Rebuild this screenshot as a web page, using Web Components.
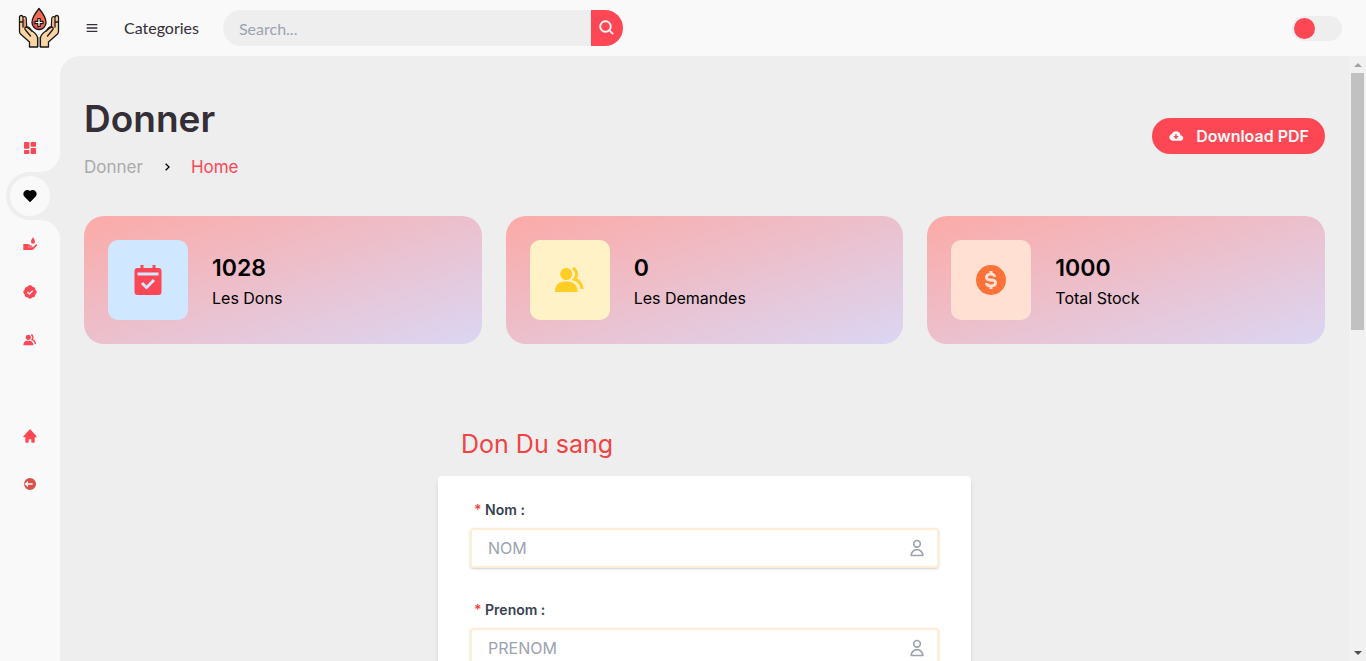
<!DOCTYPE html>
<html lang="fr">
<head>
<meta charset="utf-8">
<meta name="viewport" content="width=device-width, initial-scale=1">
<title>Donner</title>
<style>
  :root {
    --light: #f9f9f9;
    --grey: #eee;
    --dark: #342e37;
    --red: #fd4755;
    --sans: Inter, "Open Sans", sans-serif;
    --lato: Lato, "Open Sans", sans-serif;
  }
  html, body { height: 100%; margin: 0; }
  body { background: var(--light); color: #000; font-family: var(--sans); font-size: 15px; overflow: hidden; }
</style>
</head>
<body>
<app-shell>
  <app-logo slot="logo"></app-logo>
  <top-bar slot="top"></top-bar>
  <side-nav slot="side"></side-nav>
  <page-header heading="Donner" current="Home" action="Download PDF"></page-header>
  <stat-grid>
    <stat-card icon="calendar" value="1028" label="Les Dons" style="--tile:#cfe8ff;--ink:#fd4755"></stat-card>
    <stat-card icon="group" value="0" label="Les Demandes" style="--tile:#fff2c6;--ink:#ffce26"></stat-card>
    <stat-card icon="dollar" value="1000" label="Total Stock" style="--tile:#ffe0d3;--ink:#fd7238"></stat-card>
  </stat-grid>
  <donation-form heading="Don Du sang">
    <form-field name="nom" label="Nom :" placeholder="NOM"></form-field>
    <form-field name="prenom" label="Prenom :" placeholder="PRENOM"></form-field>
  </donation-form>
</app-shell>

<script>
const ICONS = {
  menu: '<path d="M4 6h16v2H4zm0 5h16v2H4zm0 5h16v2H4z"/>',
  search: '<path stroke="currentColor" stroke-width=".5" d="M10 18a7.952 7.952 0 0 0 4.897-1.688l4.396 4.396 1.414-1.414-4.396-4.396A7.952 7.952 0 0 0 18 10c0-4.411-3.589-8-8-8s-8 3.589-8 8 3.589 8 8 8zm0-14c3.309 0 6 2.691 6 6s-2.691 6-6 6-6-2.691-6-6 2.691-6 6-6z"/>',
  dashboard: '<path d="M4 13h6a1 1 0 0 0 1-1V4a1 1 0 0 0-1-1H4a1 1 0 0 0-1 1v8a1 1 0 0 0 1 1zm-1 7a1 1 0 0 0 1 1h6a1 1 0 0 0 1-1v-4a1 1 0 0 0-1-1H4a1 1 0 0 0-1 1v4zm10 0a1 1 0 0 0 1 1h6a1 1 0 0 0 1-1v-7a1 1 0 0 0-1-1h-6a1 1 0 0 0-1 1v7zm1-10h6a1 1 0 0 0 1-1V4a1 1 0 0 0-1-1h-6a1 1 0 0 0-1 1v5a1 1 0 0 0 1 1z"/>',
  heart: '<path d="M20.205 4.791a5.938 5.938 0 0 0-4.209-1.754A5.906 5.906 0 0 0 12 4.595a5.904 5.904 0 0 0-3.996-1.558 5.942 5.942 0 0 0-4.213 1.758c-2.353 2.363-2.352 6.059.002 8.412L12 21.414l8.207-8.207c2.354-2.353 2.355-6.049-.002-8.416z"/>',
  donate: '<path d="M2 12h7l4 2.200h2.500V16H9v1h7.500l4-4.300a1.300 1.300 0 0 1 2 1.600L17 20.300a3 3 0 0 1-2 .7H2z"/><path d="M16.500 2s-3 4.200-3 6.500a3 3 0 0 0 6 0c0-2.300-3-6.500-3-6.500z"/>',
  badge: '<path d="M19.965 8.521C19.988 8.347 20 8.173 20 8c0-2.379-2.143-4.288-4.521-3.965C14.786 2.802 13.466 2 12 2s-2.786.802-3.479 2.035C6.138 3.712 4 5.621 4 8c0 .173.012.347.035.521C2.802 9.215 2 10.535 2 12s.802 2.785 2.035 3.479A3.976 3.976 0 0 0 4 16c0 2.379 2.138 4.283 4.521 3.965C9.214 21.198 10.534 22 12 22s2.786-.802 3.479-2.035C17.857 20.283 20 18.379 20 16c0-.173-.012-.347-.035-.521C21.198 14.785 22 13.465 22 12s-.802-2.785-2.035-3.479zm-9.01 7.895-3.667-3.714 1.424-1.404 2.257 2.286 4.327-4.294 1.408 1.42-5.749 5.706z"/>',
  group: '<path d="M9.500 12c2.206 0 4-1.794 4-4s-1.794-4-4-4-4 1.794-4 4 1.794 4 4 4zm1.500 1H8c-3.309 0-6 2.691-6 6v1h15v-1c0-3.309-2.691-6-6-6z"/><path d="M16.604 11.048a5.67 5.67 0 0 0 .751-3.44c-.179-1.784-1.175-3.361-2.803-4.44l-1.105 1.666c1.119.742 1.8 1.799 1.918 2.974a3.693 3.693 0 0 1-1.072 2.986l-1.192 1.192 1.618.475C18.951 13.701 19 17.957 19 18h2c0-1.789-.956-5.285-4.396-6.952z"/>',
  home: '<path d="m21.743 12.331-9-10c-.379-.422-1.107-.422-1.486 0l-9 10a.998.998 0 0 0-.17 1.076c.16.361.518.593.913.593h2v7a1 1 0 0 0 1 1h3a1 1 0 0 0 1-1v-4h4v4a1 1 0 0 0 1 1h3a1 1 0 0 0 1-1v-7h2a.998.998 0 0 0 .743-1.669z"/>',
  logout: '<path fill-rule="evenodd" d="M12 3a9 9 0 1 0 0 18 9 9 0 0 0 0-18zM9 7.500V11h7v2H9v3.500L3.500 12z"/>',
  calendar: '<path fill-rule="evenodd" d="M7 2h2v2h6V2h2v2h2a2 2 0 0 1 2 2v14a2 2 0 0 1-2 2H5a2 2 0 0 1-2-2V6a2 2 0 0 1 2-2h2zM5 7v2h14V7zm6 11.400 5.700-5.700-1.400-1.400-4.300 4.300-2.300-2.300-1.400 1.400z"/>',
  dollar: '<path fill-rule="evenodd" d="M12 2a10 10 0 1 0 0 20 10 10 0 0 0 0-20zM13 16.915V18h-2v-1.080c-2.339-.367-3-2.002-3-2.920h2c.011.143.159 1 2 1 1.380 0 2-.585 2-1 0-.324 0-1-2-1-3.480 0-4-1.880-4-3 0-1.288 1.029-2.584 3-2.915V6.012h2v1.109c1.734.410 2.400 1.853 2.400 2.879h-1l-1 .018C13.386 9.638 13.185 9 12 9c-1.299 0-2 .516-2 1 0 .374 0 1 2 1 3.480 0 4 1.880 4 3 0 1.288-1.029 2.584-3 2.915z"/>',
  cloud: '<path fill-rule="evenodd" d="M18.948 11.112C18.511 7.670 15.563 5 12.004 5c-2.756 0-5.150 1.611-6.243 4.150-2.148.642-3.757 2.670-3.757 4.850 0 2.757 2.243 5 5 5h12c2.206 0 4-1.794 4-4a4.008 4.008 0 0 0-3.056-3.888zM11 9h2v3h3l-4 5-4-5h3z"/>',
  chevron: '<path d="M10.707 17.707 16.414 12l-5.707-5.707-1.414 1.414L13.586 12l-4.293 4.293z"/>',
  user: '<path fill="none" stroke="currentColor" stroke-width="2" stroke-linejoin="round" d="M16 7a4 4 0 1 1-8 0 4 4 0 0 1 8 0zM12 14a7 7 0 0 0-7 7h14a7 7 0 0 0-7-7z"/>'
};

function define(name, render) {
  customElements.define(name, class extends HTMLElement {
    constructor() { super(); this.attachShadow({ mode: 'open' }); }
    connectedCallback() {
      const t = document.createElement('template');
      t.innerHTML = render(this);
      this.shadowRoot.replaceChildren(t.content.cloneNode(true));
    }
  });
}

define('ui-icon', el => `
  <style>
    :host { display: inline-flex; width: 16px; height: 16px; flex: none; }
    svg { width: 100%; height: 100%; fill: currentColor; }
  </style>
  <svg viewBox="0 0 24 24" aria-hidden="true">${ICONS[el.getAttribute('name')]}</svg>`);

define('app-logo', () => `
  <style>
    :host { display: flex; align-items: center; justify-content: flex-end; height: 56px; }
    a { display: flex; }
    svg { width: 42px; height: 42px; }
  </style>
  <a href="#" aria-label="Accueil">
  <svg viewBox="0 0 42 42">
    <g stroke="#171717" stroke-width="1.300" stroke-linejoin="round" stroke-linecap="round">
      <g fill="#fbd4a3">
        <path d="M1.500 10c0-2 3-2 3.500 0v1c0-2 3-1.600 3.200.3L8.600 20l5 3.500c2 1.500 6 4 6 8V40H11.500v-5L2.500 27c-1-1-1-2-1-3z"/>
        <path fill="#f4846c" stroke="none" d="M5.300 12h2.200v8l-2.200 1z"/>
        <path fill="none" d="M5 12v8M2 15h3M8.500 20c-2 0-2 2-1 3l5 6M8.500 20c1.700-.5 3 .2 5 4"/>
      </g>
      <g fill="#fbd4a3">
        <path d="M40.500 10c0-2-3-2-3.500 0v1c0-2-3-1.600-3.200.3L33.400 20l-5 3.500c-2 1.500-6 4-6 8V40H30.500v-5l9-8c1-1 1-2 1-3z"/>
        <path fill="#f7b08a" stroke="none" d="M36.700 12h-2.200v8l2.200 1z"/>
        <path fill="none" d="M37 12v8M40 15h-3M33.500 20c2 0 2 2 1 3l-5 6M33.500 20c-1.700-.5-3 .2-5 4"/>
      </g>
      <path fill="#888" stroke="none" d="M20.200 30h1.600v10h-1.600z"/>
      <path fill="#f4694f" d="M21 1.500s-7 8.500-7 14a7 7 0 0 0 14 0c0-5.500-7-14-7-14z"/>
      <path fill="none" stroke="#c23b45" d="M15.500 15c0 5 3 6 5 6"/>
      <path fill="#fff" stroke-width="1.200" d="M19.800 11.500h2.400v2.800H25v2.400h-2.800v2.800h-2.400v-2.800H17v-2.400h2.800z"/>
    </g>
  </svg></a>`);

define('top-bar', () => `
  <style>
    :host { display: flex; align-items: center; gap: 24px; height: 56px; padding: 0 24px; font: 16px var(--lato); color: var(--dark); }
    button { border: 0; padding: 0; display: flex; align-items: center; justify-content: center; cursor: pointer; }
    .menu { background: none; color: var(--dark); }
    a { padding-bottom: 2px; color: inherit; text-decoration: none; }
    form { display: flex; flex: 0 1 400px; height: 36px; }
    form input { flex: 1; min-width: 0; box-sizing: border-box; border: 0; outline: 0; padding: 0 16px; background: var(--grey); border-radius: 36px 0 0 36px; font: 16px var(--lato); color: var(--dark); }
    form input::placeholder { color: #9ca3af; opacity: 1; }
    form button { width: 32px; background: var(--red); color: var(--light); border-radius: 0 36px 36px 0; }
    form ui-icon { width: 18px; height: 18px; }
    .switch { appearance: none; margin: 0 0 0 auto; box-sizing: border-box; width: 50px; height: 25px; padding: 2px; border-radius: 25px; background: var(--grey); cursor: pointer; }
    .switch::before { content: ""; display: block; width: 21px; height: 21px; border-radius: 50%; background: var(--red); }
    .switch:checked::before { margin-left: auto; }
  </style>
  <button class="menu" type="button" aria-label="Menu"><ui-icon name="menu"></ui-icon></button>
  <a href="#">Categories</a>
  <form role="search">
    <input type="search" placeholder="Search..." aria-label="Search">
    <button type="submit" aria-label="Search"><ui-icon name="search"></ui-icon></button>
  </form>
  <input class="switch" type="checkbox" role="switch" aria-label="Mode sombre">`);

define('nav-item', el => `
  <style>
    :host { display: block; height: 48px; color: var(--red); }
    .cell { box-sizing: border-box; height: 48px; margin-left: 6px; padding: 4px; border-radius: 48px 0 0 48px; position: relative; }
    a { display: flex; align-items: center; justify-content: center; width: 40px; height: 40px; border-radius: 50%; color: inherit; }
    :host([active]) { color: #000; }
    :host([active]) .cell { background: var(--grey); }
    :host([active]) a { background: var(--light); }
    :host([active]) .cell::before, :host([active]) .cell::after { content: ""; position: absolute; right: 0; width: 20px; height: 20px; }
    :host([active]) .cell::before { bottom: 100%; background: radial-gradient(circle at 0 0, transparent 20px, var(--grey) 20px); }
    :host([active]) .cell::after { top: 100%; background: radial-gradient(circle at 0 100%, transparent 20px, var(--grey) 20px); }
  </style>
  <div class="cell"><a href="#" aria-label="${el.getAttribute('label')}"><ui-icon name="${el.getAttribute('icon')}"></ui-icon></a></div>`);

define('side-nav', () => `
  <style>
    :host { display: block; padding-top: 68px; }
    nav + nav { margin-top: 48px; }
    .out { color: #db504a; }
  </style>
  <nav aria-label="Principal">
    <nav-item icon="dashboard" label="Dashboard"></nav-item>
    <nav-item icon="heart" label="Donner" active></nav-item>
    <nav-item icon="donate" label="Demander"></nav-item>
    <nav-item icon="badge" label="Validation"></nav-item>
    <nav-item icon="group" label="Equipe"></nav-item>
  </nav>
  <nav aria-label="Compte">
    <nav-item icon="home" label="Home"></nav-item>
    <nav-item class="out" icon="logout" label="Logout"></nav-item>
  </nav>`);

define('scroll-rail', () => `
  <style>
    :host { display: flex; flex-direction: column; background: #f1f1f1; }
    i { height: 17px; display: flex; align-items: center; justify-content: center; }
    i::before { content: ""; border: 4px solid transparent; border-top-width: 0; border-bottom-color: #a3a3a3; }
    i.down::before { border-width: 4px 4px 0; border-color: #505050 transparent transparent; }
    .track { flex: 1; padding: 0 2px; }
    .thumb { height: 45%; background: #c1c1c1; }
  </style>
  <i></i><div class="track"><div class="thumb"></div></div><i class="down"></i>`);

define('app-shell', () => `
  <style>
    :host { display: grid; grid-template: auto minmax(0, 1fr) / 60px minmax(0, 1fr); height: 100vh; }
    .view { display: grid; grid-template-columns: minmax(0, 1fr) 17px; background: var(--grey); border-top-left-radius: 20px; min-height: 0; overflow: hidden; }
    main { padding: 36px 24px; overflow: hidden; min-height: 0; }
  </style>
  <slot name="logo"></slot>
  <slot name="top"></slot>
  <slot name="side"></slot>
  <div class="view"><main><slot></slot></main><scroll-rail></scroll-rail></div>`);

define('page-header', el => `
  <style>
    :host { display: flex; align-items: center; justify-content: space-between; gap: 16px; }
    h1 { margin: 0 0 10px; font-size: 37px; line-height: 54px; font-weight: 600; color: var(--dark); }
    ol { display: flex; align-items: center; gap: 16px; margin: 0; padding: 0 0 2px; list-style: none; font-size: 17px; line-height: 22px; }
    li { display: flex; }
    a { color: #aaa; text-decoration: none; }
    a.current { color: var(--red); }
    button { display: flex; align-items: center; gap: 12px; height: 36px; padding: 0 16px; border: 0; border-radius: 36px; background: var(--red); color: var(--light); font: 600 16px var(--sans); cursor: pointer; }
  </style>
  <div>
    <h1>${el.getAttribute('heading')}</h1>
    <ol>
      <li><a href="#">${el.getAttribute('heading')}</a></li>
      <li><ui-icon name="chevron"></ui-icon></li>
      <li><a class="current" href="#">${el.getAttribute('current')}</a></li>
    </ol>
  </div>
  <button type="button"><ui-icon name="cloud"></ui-icon>${el.getAttribute('action')}</button>`);

define('stat-grid', () => `
  <style>:host { display: grid; grid-template-columns: repeat(auto-fit, minmax(240px, 1fr)); gap: 24px; margin-top: 36px; }</style>
  <slot></slot>`);

define('stat-card', el => `
  <style>
    :host { display: flex; align-items: center; gap: 24px; padding: 24px; border-radius: 20px; background: linear-gradient(to bottom right, #fcaaa7, #dbd6f3); }
    .tile { display: flex; align-items: center; justify-content: center; width: 80px; height: 80px; border-radius: 10px; background: var(--tile); color: var(--ink); }
    ui-icon { width: 36px; height: 36px; }
    h3, p { margin: 0; }
    h3 { font-size: 23px; line-height: 36px; font-weight: 600; }
    p { font-size: 16px; line-height: 24px; }
  </style>
  <div class="tile"><ui-icon name="${el.getAttribute('icon')}"></ui-icon></div>
  <div><h3>${el.getAttribute('value')}</h3><p>${el.getAttribute('label')}</p></div>`);

define('donation-form', el => `
  <style>
    :host { display: block; max-width: 533px; margin: 80px auto 0; }
    h2 { margin: 0 0 12px; padding-left: 23px; font-size: 25px; line-height: 40px; font-weight: 400; color: #ef4444; }
    form { display: grid; gap: 28px; padding: 20px 32px 32px; background: #fff; border-radius: 4px; box-shadow: 0 4px 6px -1px rgba(0,0,0,.1), 0 2px 4px -1px rgba(0,0,0,.06); }
  </style>
  <h2>${el.getAttribute('heading')}</h2>
  <form><slot></slot></form>`);

define('form-field', el => `
  <style>
    :host { display: block; }
    label { display: block; padding-left: 4px; margin-bottom: 4px; font-size: 14px; line-height: 28px; font-weight: 600; color: #374151; }
    label span { color: #ef4444; }
    .box { display: flex; align-items: center; height: 36px; padding: 0 10px 0 16px; border: 2px solid #ffedd5; border-radius: 4px; color: #9ca3af; box-shadow: 0 1px 3px rgba(0,0,0,.1), 0 1px 2px rgba(0,0,0,.1); }
    input { flex: 1; min-width: 0; border: 0; outline: 0; padding: 0; background: none; font: 16px var(--sans); color: #374151; }
    input::placeholder { color: #9ca3af; opacity: 1; }
    ui-icon { width: 20px; height: 20px; }
  </style>
  <label for="field"><span>*</span> ${el.getAttribute('label')}</label>
  <div class="box"><input id="field" type="text" name="${el.getAttribute('name')}" placeholder="${el.getAttribute('placeholder')}"><ui-icon name="user"></ui-icon></div>`);
</script>
</body>
</html>
